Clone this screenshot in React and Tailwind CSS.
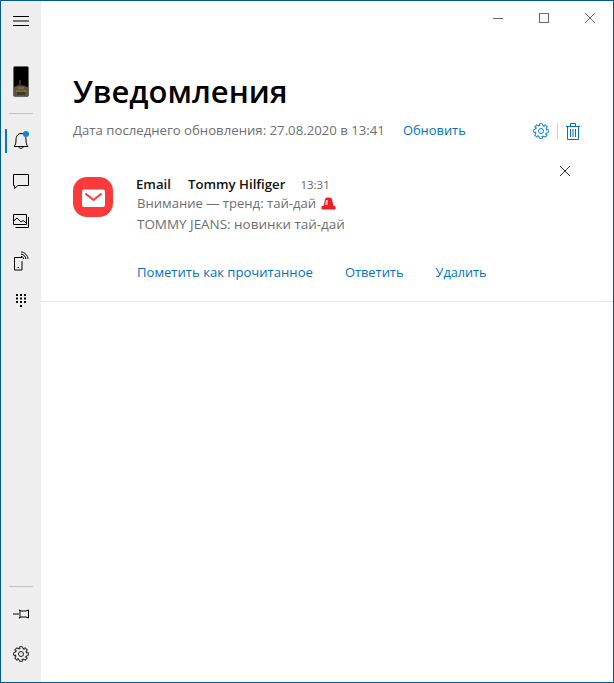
import React from 'react';

const FONT = 'font-["Open_Sans","Noto_Sans",sans-serif]';

function Gear({ className }) {
  const teeth = [0, 45, 90, 135, 180, 225, 270, 315];
  return (
    <svg viewBox="0 0 16 16" className={className} fill="none" stroke="currentColor" strokeWidth="1">
      <circle cx="8" cy="8" r="2.5" />
      {teeth.map(a => (
        <path key={a} d="M5.9 2.9 L6.6 0.7 H9.4 L10.1 2.9 L11.6 3.6" transform={`rotate(${a} 8 8)`} />
      ))}
    </svg>
  );
}

function NavIcon({ children, active }) {
  return (
    <div className="relative h-10 flex items-center justify-center">
      {active && <div className="absolute left-1 top-[8px] w-[2px] h-6 bg-[#0078d4]" />}
      {children}
    </div>
  );
}

function PhoneThumb() {
  return (
    <svg viewBox="0 0 16 31" className="w-4 h-[31px]">
      <rect x="0.5" y="0.5" width="15" height="30" rx="1.5" fill="#000" stroke="#6a6a6a" />
      <path d="M1 30V21C4 20 5 19 7 19.5C9 18.5 12 20 15 21V30Z" fill="#5e5238" />
      <path d="M7 19V14M5 22H11M3 25H13" stroke="#a3946c" strokeWidth="0.7" />
      <rect x="4" y="26" width="8" height="3" fill="#3f3828" />
    </svg>
  );
}

function Sidebar() {
  return (
    <div className="w-10 shrink-0 bg-[#eeeeee] flex flex-col items-stretch">
      <div className="h-[40px] flex items-center justify-center">
        <svg viewBox="0 0 16 12" className="w-4 h-3 text-black" stroke="currentColor" strokeWidth="1">
          <path d="M0 1.5H16M0 6H16M0 10.5H16" />
        </svg>
      </div>
      <div className="h-[72px] flex flex-col items-center">
        <div className="mt-[25px] h-[31px]"><PhoneThumb /></div>
      </div>
      <div className="mx-2 h-[1px] bg-[#c4c4c4]" />
      <div className="mt-[7px] flex flex-col">
        <NavIcon active>
          <div className="relative">
            <svg viewBox="0 0 16 18" className="w-4 h-[18px]" fill="none" stroke="#000" strokeWidth="1">
              <path d="M1 14.5H15C13.5 13 13 11 13 8C13 4 11 1.5 8 1.5C5 1.5 3 4 3 8C3 11 2.5 13 1 14.5Z" />
              <path d="M5.8 14.5C5.8 17 10.2 17 10.2 14.5" />
            </svg>
            <div className="absolute -top-[1px] left-[10px] w-[6px] h-[6px] rounded-full bg-[#0a84d6]" />
          </div>
        </NavIcon>
        <NavIcon>
          <svg viewBox="0 0 16 15" className="w-4 h-[15px]" fill="none" stroke="#000" strokeWidth="1">
            <path d="M0.5 0.5H15.5V11.5H5L1.5 14.5V11.5H0.5Z" />
          </svg>
        </NavIcon>
        <NavIcon>
          <svg viewBox="0 0 16 14" className="w-4 h-[14px]" fill="none" stroke="#000" strokeWidth="1">
            <path d="M0.5 0.5H13.5V10.5H0.5Z" />
            <path d="M15.5 3V13.5H2.5" />
            <path d="M0.5 7L4 4L8 8L10 6.5L13.5 9" />
          </svg>
        </NavIcon>
        <NavIcon>
          <svg viewBox="0 0 16 20" className="w-4 h-5" fill="none" stroke="#000" strokeWidth="1">
            <path d="M9 6.5H1.5V19H9V10" />
            <path d="M4.5 16.5H6" />
            <path d="M8 1C11.5 1 15 4.5 15 8" />
            <path d="M8 3.2C10.5 3.2 12.8 5.5 12.8 8" />
            <path d="M8 5.4C9.5 5.4 10.6 6.5 10.6 8" />
          </svg>
        </NavIcon>
        <NavIcon>
          <svg viewBox="0 0 11 14" className="w-[11px] h-[14px]" fill="#000">
            {[0, 4, 8].flatMap(x => [0, 3.5, 7].map(y => <rect key={`${x}-${y}`} x={x} y={y} width="2" height="2" />))}
            <rect x="4" y="11" width="2" height="2" />
          </svg>
        </NavIcon>
      </div>
      <div className="mt-auto mx-2 h-[1px] bg-[#c4c4c4]" />
      <div className="mt-[7px] pb-2 flex flex-col">
        <div className="h-10 flex items-center justify-center">
          <svg viewBox="0 0 16 10" className="w-4 h-[10px]" fill="none" stroke="#000" strokeWidth="1">
            <path d="M0 5H6" />
            <path d="M6 1L7 2V8L6 9H6.5L8 8H13L15.5 9V1L13 2H8L6.5 1Z" />
          </svg>
        </div>
        <div className="h-10 flex items-center justify-center">
          <Gear className="w-4 h-4 text-[#222]" />
        </div>
      </div>
    </div>
  );
}

function TitleBar() {
  return (
    <div className="h-[34px] shrink-0 flex justify-end items-center text-[#666]">
      <div className="w-[46px] flex justify-center"><div className="w-[10px] h-[1px] bg-[#666]" /></div>
      <div className="w-[46px] flex justify-center"><div className="w-[10px] h-[10px] border border-[#666]" /></div>
      <div className="w-[46px] flex justify-center">
        <svg viewBox="0 0 10 10" className="w-[10px] h-[10px]" stroke="#666" strokeWidth="1"><path d="M0 0L10 10M10 0L0 10" /></svg>
      </div>
    </div>
  );
}

function MailLogo() {
  return (
    <svg viewBox="0 0 40 40" className="w-10 h-10 shrink-0">
      <rect width="40" height="40" rx="14" fill="#fb3b3b" />
      <rect x="9" y="12.5" width="23" height="17.5" rx="2" fill="#fff" />
      <path d="M13 17L20.5 23L28 17" fill="none" stroke="#fb3b3b" strokeWidth="2" strokeLinecap="round" strokeLinejoin="round" />
    </svg>
  );
}

function Siren() {
  return (
    <svg viewBox="0 0 15 13" className="inline-block w-[15px] h-[13px] ml-[5px] align-[-2px]">
      <path d="M2.5 9L4 2.5C4.3 1 5.3 0.5 7.5 0.5C9.7 0.5 10.7 1 11 2.5L12.5 9Z" fill="#ee1c25" />
      <path d="M5 3H7L6.5 8H4Z" fill="#f7b0b0" />
      <rect x="0.5" y="9" width="14" height="3.5" rx="1" fill="#ee1c25" />
    </svg>
  );
}

export default function App() {
  return (
    <div className={`w-[614px] h-[683px] flex border border-[#005a8c] bg-white overflow-hidden ${FONT}`}>
      <Sidebar />
      <div className="flex-1 flex flex-col min-w-0">
        <TitleBar />
        <div className="pl-[32px] pr-[33px] pt-[36px]">
          <h1 className="text-[31px] leading-[40px] font-semibold text-black">Уведомления</h1>
          <div className="mt-[8px] flex items-center h-[24px] text-[13.2px]">
            <span className="text-[#6e6e6e]">Дата последнего обновления: 27.08.2020 в 13:41</span>
            <span className="ml-[18px] text-[12.9px] text-[#0072c0]">Обновить</span>
            <div className="ml-auto flex items-center">
              <Gear className="w-4 h-4 text-[#0a84d6]" />
              <div className="mx-[8px] w-[1px] h-4 bg-[#cccccc]" />
              <svg viewBox="0 0 14 17" className="w-[14px] h-[17px]" fill="none" stroke="#0072c0" strokeWidth="1">
                <path d="M0 3.5H14M1.5 3.5V16.5H12.5V3.5M4.5 3.5V0.5H9.5V3.5" />
                <path d="M4.5 6V14M7 6V14M9.5 6V14" />
              </svg>
            </div>
          </div>
        </div>
        <div className="relative pl-[32px] pt-[34px] border-b border-[#e6e6e6] h-[159px] shrink-0">
          <svg viewBox="0 0 10 10" className="absolute right-[43px] top-[23px] w-[10px] h-[10px]" stroke="#333" strokeWidth="1"><path d="M0 0L10 10M10 0L0 10" /></svg>
          <div className="flex">
            <MailLogo />
            <div className="ml-[23px] -mt-[3px] text-[13.2px] leading-[20.5px]">
              <div className="h-[19px] flex items-baseline font-semibold text-[#111]">
                <span>Email</span>
                <span className="ml-[17px]">Tommy Hilfiger</span>
                <span className="ml-[15px] font-normal text-[11.5px] text-[#666]">13:31</span>
              </div>
              <div className="pl-px text-[13.1px] text-[#6e6e6e]">Внимание — тренд: тай-дай<Siren /></div>
              <div className="pl-px text-[13.45px] text-[#6e6e6e]">TOMMY JEANS: новинки тай-дай</div>
            </div>
          </div>
          <div className="ml-[64px] mt-[29px] flex gap-[32px] text-[13.1px] text-[#0072c0]">
            <span>Пометить как прочитанное</span>
            <span className="text-[12.9px]">Ответить</span>
            <span className="text-[12.7px]">Удалить</span>
          </div>
        </div>
      </div>
    </div>
  );
}
